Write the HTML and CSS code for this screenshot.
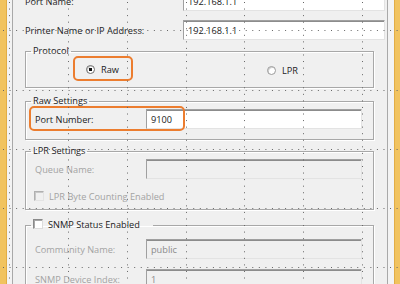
FILE: index.html
```html
<!DOCTYPE html>
<html lang="en">
<head>
  <meta charset="UTF-8">
  <title>Add Printer Port</title>
  <link rel="stylesheet" href="styles.css">
</head>
<body>
  <div class="designer">
    <div class="rail"></div>

    <div class="form">
      <div class="top-row first">
        <span class="label">Port Name:</span>
        <div class="textbox">192.168.1.1</div>
      </div>
      <div class="top-row">
        <span class="label">Printer Name or IP Address:</span>
        <div class="textbox">192.168.1.1</div>
      </div>

      <fieldset class="group protocol">
        <legend>Protocol</legend>
        <div class="radio-row">
          <div class="radio-item">
            <span class="radio checked"></span>Raw
            <span class="mark mark-raw"></span>
          </div>
          <div class="radio-item">
            <span class="radio"></span>LPR
          </div>
        </div>
      </fieldset>

      <fieldset class="group raw-settings">
        <legend>Raw Settings</legend>
        <div class="field">
          <span class="label">Port Number:</span>
          <div class="textbox">9100</div>
          <span class="mark mark-port"></span>
        </div>
      </fieldset>

      <fieldset class="group lpr-settings">
        <legend>LPR Settings</legend>
        <div class="field disabled">
          <span class="label">Queue Name:</span>
          <div class="textbox"></div>
        </div>
        <div class="check-row disabled">
          <span class="checkbox"></span>LPR Byte Counting Enabled
        </div>
      </fieldset>

      <fieldset class="group snmp">
        <legend><span class="checkbox"></span>SNMP Status Enabled</legend>
        <div class="field disabled">
          <span class="label">Community Name:</span>
          <div class="textbox">public</div>
        </div>
        <div class="field disabled second">
          <span class="label">SNMP Device Index:</span>
          <div class="textbox">1</div>
        </div>
      </fieldset>
    </div>

    <div class="rail right"></div>

    <!-- designer snap grid -->
    <svg class="grid" width="400" height="284" viewBox="0 0 400 284">
      <path d="M9.5 0V284M68.5 0V284M127.5 0V284M186.5 0V284M244.5 0V284M303.5 0V284M362.5 0V284"
            stroke="#666" stroke-width="1" stroke-dasharray="1 5.56" stroke-dashoffset="-2"/>
      <path d="M0 30.5H400M0 90.5H400M0 149.5H400M0 208.5H400M0 267.5H400"
            stroke="#666" stroke-width="1" stroke-dasharray="1 5.56" stroke-dashoffset="-3"/>
    </svg>
  </div>
</body>
</html>
```

FILE: styles.css
```css
body {
  margin: 0;
  font-family: "Open Sans", "Noto Sans", sans-serif;
  font-size: 9.2px;
  color: #1c1c24;
  background: #f0f0f0;
}

.designer {
  position: relative;
  display: flex;
  width: 400px;
  height: 284px;
  overflow: hidden;
  background: #f3f3f3;
}

.rail {
  flex: none;
  width: 7px;
  background: #f1c35f;
  box-shadow: inset -1px 0 0 #e2ad45;
}

.rail.right {
  width: 6px;
  box-shadow: inset 1px 0 0 #e2ad45;
}

.form {
  flex: 1;
  margin: 0 6px 0 5px;
  border-left: 1px solid #a9a9a9;
  border-right: 1px solid #a9a9a9;
  background: #f0f0f0;
}

/* top rows */
.top-row {
  display: grid;
  grid-template-columns: 158px 1fr;
  align-items: center;
  height: 20px;
  padding: 0 2px 0 12px;
  margin-top: 9px;
}

.top-row.first {
  margin-top: -9px;
}

.textbox {
  box-sizing: border-box;
  height: 20px;
  display: flex;
  align-items: center;
  padding: 0 4px;
  background: #fff;
  border: 1px solid;
  border-color: #a0a0a0 #e3e3e3 #e3e3e3 #a0a0a0;
  box-shadow: inset 0 1px 0 #8c8c8c;
  color: #1a1a1a;
}

/* group boxes */
.group {
  margin: 0 13px 0 12px;
  padding: 0;
  min-width: 0;
  border: 1px solid #a8a8a8;
  box-shadow: inset 1px 1px 0 #fff, 1px 1px 0 #fff;
}

.group legend {
  margin-left: 5px;
  padding: 0 2px;
  line-height: 12px;
  height: 12px;
}

.protocol { margin-top: 5px; }
.raw-settings { margin-top: 7px; padding-bottom: 10px; }
.lpr-settings { margin-top: 5px; padding-bottom: 7px; }
.snmp { margin-top: 9px; padding-bottom: 20px; }

.radio-row {
  display: grid;
  grid-template-columns: 241px auto;
  padding: 6px 0 10px;
}

.radio-item {
  position: relative;
  display: flex;
  align-items: center;
  height: 13px;
}

.radio-item:first-child {
  margin-left: 60px;
}

.radio-item:last-child {
  margin-top: 1px;
}

.radio {
  box-sizing: border-box;
  width: 9px;
  height: 9px;
  margin-right: 6px;
  border-radius: 50%;
  background: #fff;
  border: 1px solid #9a9a9a;
  box-shadow: inset 1px 1px 0 #cfcfcf;
}

.radio.checked {
  background: radial-gradient(circle, #111 1.6px, #fff 2px);
  border-color: #707070;
}

.field {
  position: relative;
  display: grid;
  grid-template-columns: 111px 1fr;
  align-items: center;
  margin: 2px 11px 0 9px;
}

.field.second {
  margin-top: 10px;
}

.snmp .field:first-of-type {
  margin-top: 8px;
}

.disabled {
  color: #a3a3a3;
}

.disabled .textbox {
  background: #f0f0f0;
  color: #8a8a8a;
}

.check-row {
  display: flex;
  align-items: center;
  height: 12px;
  margin: 11px 0 0 8px;
}

.checkbox {
  box-sizing: border-box;
  display: inline-block;
  width: 10px;
  height: 10px;
  margin-right: 5px;
  vertical-align: -1px;
  background: #fff;
  border: 1px solid;
  border-color: #8a8a8a #dcdcdc #dcdcdc #8a8a8a;
  box-shadow: inset 1px 1px 0 #a8a8a8;
}

.check-row .checkbox {
  background: #f0f0f0;
  border-color: #b0b0b0 #e3e3e3 #e3e3e3 #b0b0b0;
  box-shadow: inset 1px 1px 0 #c8c8c8;
}

.snmp legend {
  padding: 0 13px 0 2px;
  color: #1a1a1a;
}

/* orange callouts */
.mark {
  position: absolute;
  box-sizing: border-box;
  border: 2px solid #ec7d2f;
  border-radius: 5px;
}

.mark-raw {
  left: -13px;
  top: -7px;
  width: 60px;
  height: 25px;
}

.mark-port {
  left: -6px;
  top: -3px;
  width: 156px;
  height: 25px;
}

.grid {
  position: absolute;
  left: 0;
  top: 0;
  pointer-events: none;
}
```
